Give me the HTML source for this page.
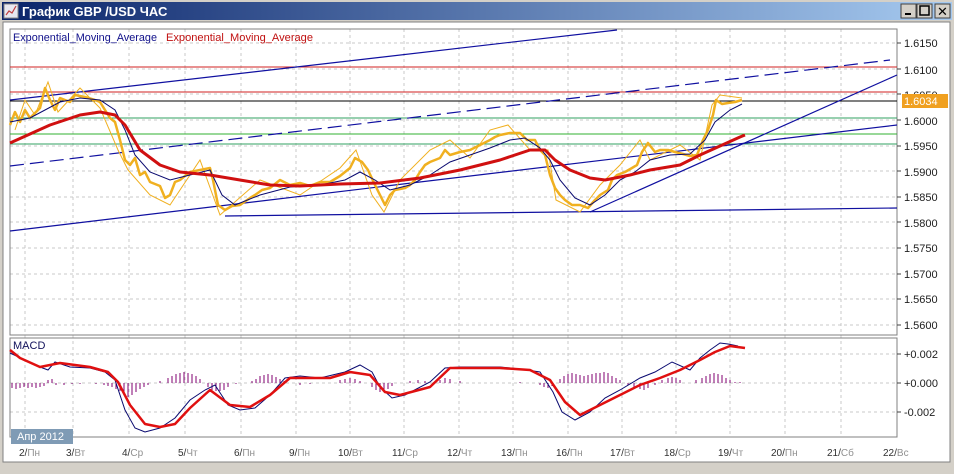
<!DOCTYPE html>
<html><head><meta charset="utf-8"><style>
body{margin:0;width:954px;height:469px;overflow:hidden;background:#d4d0c8;font-family:"Liberation Sans",sans-serif}
</style></head><body>
<svg width="954" height="469" xmlns="http://www.w3.org/2000/svg" font-family="Liberation Sans, DejaVu Sans, sans-serif">
<rect width="954" height="469" fill="#d4d0c8"/>
<defs><linearGradient id="tb" x1="0" x2="1"><stop offset="0" stop-color="#0a246a"/><stop offset="1" stop-color="#a6caf0"/></linearGradient></defs>
<rect x="2" y="2" width="950" height="18" fill="url(#tb)"/>
<rect x="4" y="4" width="14" height="14" fill="#e8e8f0" stroke="#888"/>
<polyline points="6,15 9,11 12,13 16,6" fill="none" stroke="#c04040" stroke-width="1.2"/>
<text x="22" y="16" fill="#fff" font-size="13" font-weight="bold">График GBP /USD  ЧАС</text>
<g fill="#d4d0c8" stroke="#404040"><rect x="901" y="4" width="15" height="14"/><rect x="917" y="4" width="15" height="14"/><rect x="935" y="4" width="15" height="14"/></g>
<rect x="905" y="13" width="6" height="2" fill="#000"/>
<rect x="920" y="6" width="9" height="9" fill="none" stroke="#000" stroke-width="1.5"/>
<text x="937" y="16" font-size="13" font-weight="bold">✕</text>
<rect x="3" y="22" width="947" height="440" fill="#fff" stroke="#808080"/>
<!-- grid -->
<g stroke="#c8c8c8" stroke-dasharray="3,3" stroke-width="1" shape-rendering="crispEdges">
<line x1="10" x2="897" y1="43" y2="43"/><line x1="10" x2="897" y1="69" y2="69"/><line x1="10" x2="897" y1="94" y2="94"/><line x1="10" x2="897" y1="120" y2="120"/><line x1="10" x2="897" y1="146" y2="146"/><line x1="10" x2="897" y1="171" y2="171"/><line x1="10" x2="897" y1="197" y2="197"/><line x1="10" x2="897" y1="222" y2="222"/><line x1="10" x2="897" y1="248" y2="248"/><line x1="10" x2="897" y1="274" y2="274"/><line x1="10" x2="897" y1="299" y2="299"/><line x1="10" x2="897" y1="325" y2="325"/>
<line x1="10" x2="897" y1="354" y2="354"/><line x1="10" x2="897" y1="383" y2="383"/><line x1="10" x2="897" y1="412" y2="412"/>
<line x1="25" x2="25" y1="29" y2="437"/><line x1="73" x2="73" y1="29" y2="437"/><line x1="129" x2="129" y1="29" y2="437"/><line x1="185" x2="185" y1="29" y2="437"/><line x1="241" x2="241" y1="29" y2="437"/><line x1="296" x2="296" y1="29" y2="437"/><line x1="350" x2="350" y1="29" y2="437"/><line x1="404" x2="404" y1="29" y2="437"/><line x1="459" x2="459" y1="29" y2="437"/><line x1="513" x2="513" y1="29" y2="437"/><line x1="568" x2="568" y1="29" y2="437"/><line x1="622" x2="622" y1="29" y2="437"/><line x1="676" x2="676" y1="29" y2="437"/><line x1="730" x2="730" y1="29" y2="437"/><line x1="785" x2="785" y1="29" y2="437"/><line x1="841" x2="841" y1="29" y2="437"/>
</g>
<rect x="10" y="29" width="887" height="306" fill="none" stroke="#808080"/>
<rect x="10" y="338" width="887" height="99" fill="none" stroke="#808080"/>
<!-- levels -->
<g shape-rendering="crispEdges">
<line x1="10" x2="897" y1="67" y2="67" stroke="#d02020"/>
<line x1="10" x2="897" y1="92" y2="92" stroke="#d02020"/>
<line x1="10" x2="897" y1="101" y2="101" stroke="#000"/>
<line x1="10" x2="897" y1="118" y2="118" stroke="#30a060"/>
<line x1="10" x2="897" y1="134" y2="134" stroke="#30b030"/>
<line x1="10" x2="897" y1="144" y2="144" stroke="#30a060"/>
</g>
<!-- trend lines -->
<g stroke="#1010a0" stroke-width="1.2" fill="none">
<line x1="10" y1="100" x2="617" y2="30"/>
<line x1="10" y1="166" x2="890" y2="60" stroke-dasharray="14,6"/>
<line x1="10" y1="231" x2="897" y2="125"/>
<line x1="225" y1="216" x2="897" y2="208"/>
<line x1="590" y1="212" x2="897" y2="75"/>
</g>
<!-- price -->
<polyline fill="none" stroke="#f0b020" stroke-width="2.5" stroke-linejoin="round" points="10,125 15,112 20,122 25,110 30,118 40,108 45,88 50,100 55,110 60,98 70,102 75,95 85,97 95,100 100,102 105,110 110,118 115,122 120,140 125,160 130,165 135,158 140,175 145,172 150,182 160,186 165,198 170,195 175,182 180,180 190,172 200,170 210,168 213,180 218,205 225,210 232,206 240,205 250,198 255,195 262,190 270,188 280,180 290,185 300,183 310,186 320,182 330,182 340,176 350,168 355,158 362,162 368,170 375,185 380,195 385,205 390,195 395,190 405,188 410,185 415,180 420,172 425,165 430,162 435,160 440,158 445,150 450,155 460,152 470,150 480,145 490,140 495,137 500,135 510,133 520,133 527,140 535,140 540,150 545,155 550,175 555,188 560,195 565,200 572,205 580,205 588,208 595,200 600,195 608,190 612,180 617,175 625,172 632,168 637,165 642,152 648,143 655,152 660,150 668,150 675,152 683,154 690,156 697,155 703,140 708,130 713,115 716,100 722,104 728,103 735,102 742,100"/>
<polyline fill="none" stroke="#f0b020" stroke-width="1" points="15,130 25,100 35,115 48,82 58,112 80,88 100,108 118,150 128,170 150,195 170,205 200,160 220,215 260,180 300,195 340,168 356,150 372,195 384,212 400,180 430,150 450,140 470,158 490,130 508,125 530,150 548,150 556,200 580,212 600,185 620,165 640,140 650,160 680,145 700,160 712,105 720,95 742,98"/>
<!-- MAs -->
<polyline fill="none" stroke="#0a0a70" stroke-width="1" points="10,122 30,118 45,110 60,102 80,98 100,100 115,110 125,130 135,155 150,172 170,180 190,175 210,170 222,195 235,205 260,195 290,187 320,185 345,180 360,172 375,180 390,190 410,185 430,175 450,162 470,155 490,148 510,140 525,138 540,148 550,160 560,180 575,198 590,205 605,195 620,180 635,172 650,160 670,155 690,154 705,140 715,122 730,110 742,104"/>
<polyline fill="none" stroke="#d01010" stroke-width="3" stroke-linejoin="round" points="10,143 50,125 80,115 100,112 115,115 125,125 140,150 160,165 180,172 210,175 240,180 270,185 300,186 340,184 380,183 420,178 460,170 500,160 530,150 545,150 555,160 570,170 590,178 605,180 630,175 650,170 680,165 700,155 720,146 740,137 745,135"/>
<!-- MACD hist -->
<g stroke="#800070" stroke-width="1" shape-rendering="crispEdges">
<path d="M12 383v5M16 383v6M20 383v5M24 383v4M28 383v5M32 383v4M36 383v5M40 383v4M44 383v3M48 383v-3M52 383v-4M56 383v2M64 383v2M72 383v1M80 383v1M96 383v1M104 383v2M108 383v3M112 383v4M116 383v6M120 383v8M124 383v11M128 383v14M132 383v12M136 383v9M140 383v6M144 383v4M148 383v2M160 383v-2M168 383v-5M172 383v-7M176 383v-9M180 383v-10M184 383v-11M188 383v-10M192 383v-9M196 383v-7M200 383v-4M208 383v4M212 383v7M216 383v8M220 383v8M224 383v7M228 383v4M236 383v1M252 383v-2M256 383v-4M260 383v-7M264 383v-8M268 383v-9M272 383v-8M276 383v-6M280 383v-4M284 383v-2M300 383v2M310 383v1M340 383v-3M345 383v-4M350 383v-5M355 383v-4M360 383v-2M372 383v4M376 383v7M380 383v9M384 383v8M388 383v6M392 383v3M410 383v-2M418 383v-3M425 383v-2M440 383v-3M445 383v-5M450 383v-4M460 383v-2M520 383v-1M540 383v2M544 383v4M548 383v5M552 383v3M560 383v-4M564 383v-7M568 383v-9M572 383v-10M576 383v-9M580 383v-8M584 383v-7M588 383v-8M592 383v-9M596 383v-10M600 383v-10M604 383v-11M608 383v-10M612 383v-7M616 383v-5M620 383v-3M628 383v2M634 383v4M640 383v6M644 383v7M648 383v5M655 383v2M662 383v-3M668 383v-5M672 383v-6M676 383v-5M680 383v-3M696 383v-3M702 383v-5M706 383v-7M710 383v-9M714 383v-10M718 383v-9M722 383v-8M726 383v-5M730 383v-3M735 383v-1M740 383v-1"/>
</g>
<polyline fill="none" stroke="#0a0a70" stroke-width="1" points="10,353 25,360 40,367 48,370 55,362 70,367 90,368 105,372 115,380 125,410 135,428 145,432 160,428 175,418 190,400 205,390 215,385 228,405 240,410 255,408 270,395 285,378 300,376 320,378 345,372 360,365 372,372 380,387 392,398 405,395 430,382 445,368 460,367 500,367 520,369 540,372 553,392 562,412 575,420 590,412 605,398 620,390 640,378 655,372 672,362 690,370 700,358 710,350 720,343 728,344 738,346"/>
<polyline fill="none" stroke="#e01010" stroke-width="2.5" stroke-linejoin="round" points="10,350 20,358 40,367 60,363 90,367 108,372 118,382 130,405 145,424 160,427 175,424 190,408 210,390 230,405 250,407 270,395 290,378 305,378 330,378 350,372 370,375 385,392 400,395 430,387 450,368 500,368 530,370 550,380 565,402 580,415 600,405 620,395 640,385 660,378 680,370 700,360 715,352 730,346 745,348"/>
<!-- legend -->
<text x="13" y="41" font-size="11" fill="#10108a" textLength="144" lengthAdjust="spacingAndGlyphs">Exponential_Moving_Average</text>
<text x="166" y="41" font-size="11" fill="#c01010" textLength="147" lengthAdjust="spacingAndGlyphs">Exponential_Moving_Average</text>
<text x="13" y="349" font-size="11" fill="#10105a">MACD</text>
<!-- axes -->
<g font-size="11" fill="#202020">
<text x="904" y="47">1.6150</text><text x="904" y="74">1.6100</text><text x="904" y="99">1.6050</text><text x="904" y="125">1.6000</text><text x="904" y="150">1.5950</text><text x="904" y="176">1.5900</text><text x="904" y="201">1.5850</text><text x="904" y="227">1.5800</text><text x="904" y="252">1.5750</text><text x="904" y="278">1.5700</text><text x="904" y="303">1.5650</text><text x="904" y="329">1.5600</text>
<text x="904" y="358">+0.002</text><text x="904" y="387">+0.000</text><text x="904" y="416">-0.002</text>
</g>
<rect x="902" y="94" width="46" height="14" fill="#f0a020"/>
<text x="904" y="105" font-size="11" fill="#fff">1.6034</text>
<g stroke="#404040"><path d="M897 43h4M897 69h4M897 94h4M897 120h4M897 146h4M897 171h4M897 197h4M897 222h4M897 248h4M897 274h4M897 299h4M897 325h4M897 354h4M897 383h4M897 412h4"/></g>
<rect x="11" y="429" width="62" height="15" fill="#7f9bb5"/>
<text x="17" y="440" font-size="11" fill="#fff">Апр 2012</text>
<g font-size="10" fill="#909090">
<text x="19" y="456"><tspan fill="#303030">2/</tspan>Пн</text><text x="66" y="456"><tspan fill="#303030">3/</tspan>Вт</text><text x="122" y="456"><tspan fill="#303030">4/</tspan>Ср</text><text x="178" y="456"><tspan fill="#303030">5/</tspan>Чт</text><text x="234" y="456"><tspan fill="#303030">6/</tspan>Пн</text><text x="289" y="456"><tspan fill="#303030">9/</tspan>Пн</text><text x="338" y="456"><tspan fill="#303030">10/</tspan>Вт</text><text x="392" y="456"><tspan fill="#303030">11/</tspan>Ср</text><text x="447" y="456"><tspan fill="#303030">12/</tspan>Чт</text><text x="501" y="456"><tspan fill="#303030">13/</tspan>Пн</text><text x="556" y="456"><tspan fill="#303030">16/</tspan>Пн</text><text x="610" y="456"><tspan fill="#303030">17/</tspan>Вт</text><text x="664" y="456"><tspan fill="#303030">18/</tspan>Ср</text><text x="718" y="456"><tspan fill="#303030">19/</tspan>Чт</text><text x="771" y="456"><tspan fill="#303030">20/</tspan>Пн</text><text x="827" y="456"><tspan fill="#303030">21/</tspan>Сб</text><text x="883" y="456"><tspan fill="#303030">22/</tspan>Вс</text>
</g>
</svg>
</body></html>
